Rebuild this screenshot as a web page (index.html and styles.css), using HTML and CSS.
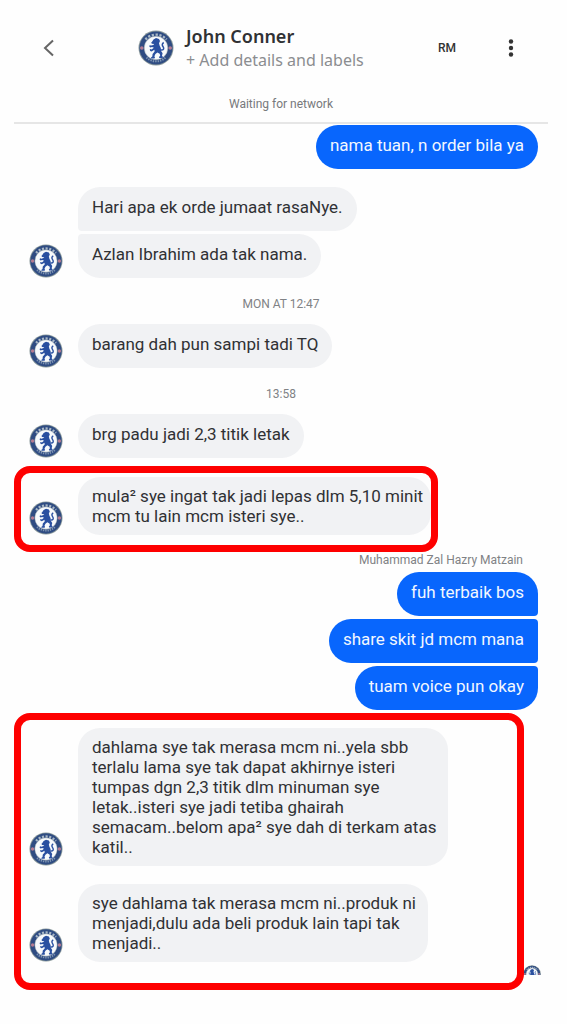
FILE: index.html
```html
<!DOCTYPE html>
<html lang="ms">
<head>
<meta charset="utf-8">
<meta name="viewport" content="width=device-width, initial-scale=1">
<title>John Conner</title>
<link rel="stylesheet" href="styles.css">
</head>
<body>
<svg class="defs" aria-hidden="true">
  <symbol id="crest" viewBox="0 0 36 36">
    <circle cx="18" cy="18" r="17.5" fill="#8c9a9c"/>
    <circle cx="18" cy="18" r="16.6" fill="#2f4c82"/>
    <path d="M7.5 9.5A13.8 13.8 0 0 1 28.5 9.5" fill="none" stroke="#a9b8c6" stroke-width="2.4" stroke-dasharray="2.2 1.6"/>
    <path d="M8.5 27.5A13.8 13.8 0 0 0 27.5 27.5" fill="none" stroke="#7f95b3" stroke-width="2" stroke-dasharray="1.4 1"/>
    <circle cx="3.8" cy="18" r="1.8" fill="#b47b91"/>
    <circle cx="32.2" cy="18" r="1.8" fill="#b47b91"/>
    <circle cx="18" cy="18" r="11.8" fill="#f7fafc" stroke="#9aa5aa" stroke-width=".5"/>
    <path d="M15.5 9.5l2.5-1.4 3 .9 1 2-1 2.2.6 2.3 1.2 2.5.3 3 1.5 2.2-.6 2.6 1 1.2-.5 1h-3.2l-.3-1 1.2-1.2-.5-2-2.3-1.2-2 1.4-1 2.2.6 1.2-.6 1h-3.2l-.2-1 1.3-.8.3-2.7 2-2.3-.2-1.8-2.8 1.6-1.4-.4-.5-1.4.9-.6 1 .5 2.3-1.8-1.8-.8-2 .5-1-1.3.8-.9 1.2.3 2.2-.6.9-1-2.2-.2-.9-1 .8-.7z" fill="#2a50a0"/>
    <path d="M22.8 20c3 .3 3.500-1.600 2.300-3.200s-1.200-3.200.6-4.300" fill="none" stroke="#2a50a0" stroke-width="1.500"/>
  </symbol>
</svg>

<header class="topbar">
  <div class="topbar-row">
    <button class="icon-button back" type="button" aria-label="Back">
      <svg width="12" height="18" viewBox="0 0 12 18"><path d="M10 1.5L2 9l8 7.500" fill="none" stroke="#666" stroke-width="2"/></svg>
    </button>
    <svg class="avatar avatar-header" role="img" aria-label="John Conner"><use href="#crest"/></svg>
    <div class="contact">
      <h1 class="contact-name">John Conner</h1>
      <button class="contact-details" type="button">+ Add details and labels</button>
    </div>
    <button class="currency" type="button">RM</button>
    <button class="icon-button menu" type="button" aria-label="More">
      <svg width="6" height="18" viewBox="0 0 6 18" fill="#333"><circle cx="3" cy="2.5" r="2.2"/><circle cx="3" cy="9" r="2.2"/><circle cx="3" cy="15.500" r="2.2"/></svg>
    </button>
  </div>
  <p class="network">Waiting for network</p>
</header>

<main class="thread">
  <div class="group sent">
    <p class="bubble">nama tuan, n order bila ya</p>
  </div>

  <div class="group received spaced">
    <p class="bubble joined-below">Hari apa ek orde jumaat rasaNye.</p>
    <div class="with-avatar">
      <svg class="avatar"><use href="#crest"/></svg>
      <p class="bubble joined-above">Azlan Ibrahim ada tak nama.</p>
    </div>
  </div>

  <p class="time">MON AT 12:47</p>
  <div class="group received">
    <div class="with-avatar">
      <svg class="avatar"><use href="#crest"/></svg>
      <p class="bubble">barang dah pun sampi tadi TQ</p>
    </div>
  </div>

  <p class="time">13:58</p>
  <div class="group received">
    <div class="with-avatar">
      <svg class="avatar"><use href="#crest"/></svg>
      <p class="bubble">brg padu jadi 2,3 titik letak</p>
    </div>
  </div>

  <section class="highlight highlight-short">
    <div class="with-avatar">
      <svg class="avatar"><use href="#crest"/></svg>
      <p class="bubble long">mula² sye ingat tak jadi lepas dlm 5,10 minit<br>mcm tu lain mcm isteri sye..</p>
    </div>
  </section>

  <p class="sender">Muhammad Zal Hazry Matzain</p>
  <div class="group sent">
    <p class="bubble joined-below">fuh terbaik bos</p>
    <p class="bubble joined-above joined-below">share skit jd mcm mana</p>
    <p class="bubble joined-above">tuam voice pun okay</p>
  </div>

  <section class="highlight highlight-tall">
    <div class="with-avatar">
      <svg class="avatar"><use href="#crest"/></svg>
      <p class="bubble long">dahlama sye tak merasa mcm ni..yela sbb<br>terlalu lama sye tak dapat akhirnye isteri<br>tumpas dgn 2,3 titik dlm minuman sye<br>letak..isteri sye jadi tetiba ghairah<br>semacam..belom apa² sye dah di terkam atas<br>katil..</p>
    </div>
    <div class="with-avatar">
      <svg class="avatar"><use href="#crest"/></svg>
      <p class="bubble long">sye dahlama tak merasa mcm ni..produk ni<br>menjadi,dulu ada beli produk lain tapi tak<br>menjadi..</p>
    </div>
    <span class="seen"><svg width="18" height="18"><use href="#crest"/></svg></span>
  </section>
</main>
</body>
</html>
```
FILE: styles.css
```css
* {
  box-sizing: border-box;
}

body {
  margin: 0;
  background: #fefefe;
  color: #303134;
  font-family: Roboto, "Liberation Sans", sans-serif;
  font-size: 17px;
  line-height: 20px;
}

h1,
p {
  margin: 0;
}

button {
  padding: 0;
  border: 0;
  background: none;
  font: inherit;
  text-align: left;
}

.defs {
  position: absolute;
  width: 0;
  height: 0;
}

.topbar {
  margin: 0 19px 0 14px;
  padding-top: 24px;
  border-bottom: 2px solid #e6e6e6;
}

.topbar-row {
  display: flex;
  align-items: center;
  height: 48px;
  padding: 0 34px 0 29px;
}

.icon-button {
  display: flex;
}

.back {
  margin-right: 83px;
}

.avatar {
  flex: none;
  width: 34px;
  height: 34px;
}

.avatar-header {
  width: 36px;
  height: 36px;
}

.contact {
  display: flex;
  flex: 1;
  flex-direction: column;
  align-items: flex-start;
  padding-left: 12px;
  font-family: "Noto Sans", sans-serif;
  line-height: 24px;
  white-space: nowrap;
}

.contact-name {
  font-size: 18px;
  font-weight: 600;
}

.contact-details {
  color: #8b8d90;
  font-size: 16px;
}

.currency {
  margin-right: 52px;
  color: #333;
  font-size: 12px;
  font-weight: 500;
}

.network {
  padding: 24px 0 10px;
  color: #77797c;
  font-size: 12px;
  line-height: 16px;
  text-align: center;
}

.thread {
  display: flex;
  flex-direction: column;
  padding: 1px 29px 34px 14px;
}

.group {
  display: flex;
  flex-direction: column;
  gap: 3px;
}

.sent {
  align-items: flex-end;
}

.received {
  align-items: flex-start;
  padding-left: 15px;
}

.received > .bubble {
  margin-left: 49px;
}

.spaced {
  margin-top: 18px;
}

.with-avatar {
  display: flex;
  align-items: flex-end;
  gap: 15px;
}

.bubble {
  padding: 10px 14px 14px;
  border-radius: 22px;
  background: #f1f2f4;
}

.bubble.long {
  padding: 9px 12px 9px 14px;
}

.sent .bubble {
  background: #0866fd;
  color: #f2f7ff;
}

.received .joined-below {
  border-bottom-left-radius: 4px;
}

.received .joined-above {
  border-top-left-radius: 4px;
}

.sent .joined-below {
  border-bottom-right-radius: 4px;
}

.sent .joined-above {
  border-top-right-radius: 4px;
}

.time {
  margin: 18px 0 12px;
  padding-left: 10px;
  color: #808285;
  font-size: 12px;
  line-height: 16px;
  text-align: center;
}

.sender {
  padding: 0 15px 4px;
  color: #808285;
  font-size: 12px;
  line-height: 16px;
  text-align: right;
}

.highlight {
  position: relative;
  display: flex;
  flex-direction: column;
  gap: 18px;
  border: 7px solid #fe0000;
  border-radius: 16px;
}

.highlight-short {
  align-self: flex-start;
  margin-top: 8px;
  padding: 4px 0 10px 8px;
}

.highlight-short .bubble {
  padding-right: 8px;
}

.highlight-tall {
  margin: 3px 14px 0 0;
  padding: 8px 0 21px 8px;
}

.seen {
  position: absolute;
  right: -24px;
  bottom: 8px;
  z-index: -1;
  width: 18px;
  height: 10px;
  overflow: hidden;
}

.seen svg {
  display: block;
}
```
